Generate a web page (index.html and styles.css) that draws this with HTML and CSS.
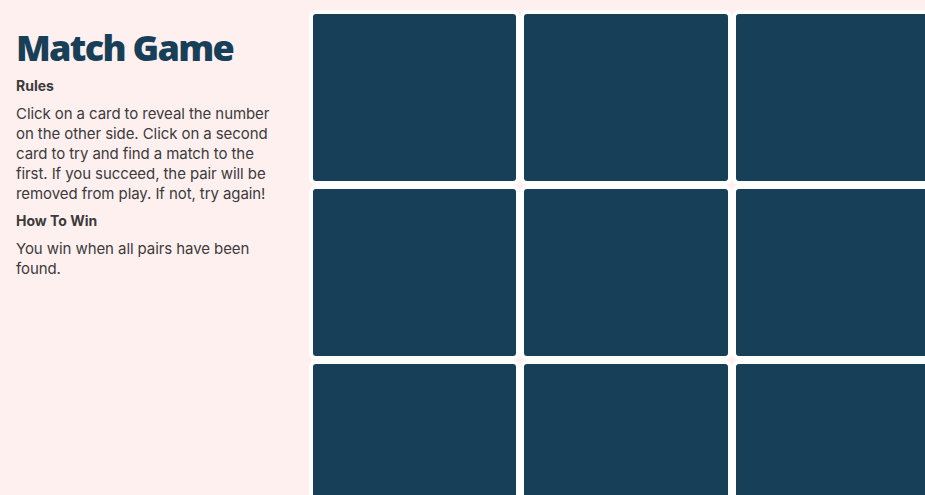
FILE: index.html
```html
<!DOCTYPE html>
<html lang="en">
<head>
<meta charset="utf-8">
<title>Match Game</title>
<link rel="stylesheet" href="styles.css">
</head>
<body>
<div class="page">
  <aside class="sidebar">
    <h1 class="title">Match Game</h1>
    <h3 class="subhead">Rules</h3>
    <p class="text">Click on a card to reveal the number on the other side. Click on a second card to try and find a match to the first. If you succeed, the pair will be removed from play. If not, try again!</p>
    <h3 class="subhead">How To Win</h3>
    <p class="text">You win when all pairs have been found.</p>
  </aside>
  <main class="board">
    <div class="grid">
      <div class="card"></div><div class="card"></div><div class="card"></div><div class="card"></div>
      <div class="card"></div><div class="card"></div><div class="card"></div><div class="card"></div>
      <div class="card"></div><div class="card"></div><div class="card"></div><div class="card"></div>
      <div class="card"></div><div class="card"></div><div class="card"></div><div class="card"></div>
    </div>
  </main>
</div>
</body>
</html>
```
FILE: styles.css
```css
html, body {
  margin: 0;
  padding: 0;
  background: #fff0f0;
  overflow: hidden;
}
.page {
  display: flex;
  align-items: flex-start;
  font-family: "Inter", "Open Sans", sans-serif;
  color: #3b3b3b;
}
.sidebar {
  flex: 0 0 309px;
  box-sizing: border-box;
  padding: 26px 24px 0 16px;
}
.title {
  margin: 0 0 6px;
  font-family: "Open Sans", sans-serif;
  font-size: 36px;
  line-height: 44px;
  font-weight: 800;
  color: #183f58;
  letter-spacing: -1.7px;
}
.subhead {
  margin: 0;
  font-size: 14px;
  line-height: 20px;
  font-weight: 700;
  color: #3b3b3b;
}
.text {
  margin: 8px 0 7px;
  font-size: 15px;
  line-height: 20px;
  letter-spacing: -0.08px;
}
.board {
  flex: 0 0 auto;
  padding-top: 10px;
}
.grid {
  display: grid;
  grid-template-columns: 211px repeat(3, 212px);
  grid-auto-rows: 175px;
}
.card {
  box-sizing: border-box;
  border: 4px solid #ffffff;
  border-radius: 7px;
  background: #183f58;
}
```
